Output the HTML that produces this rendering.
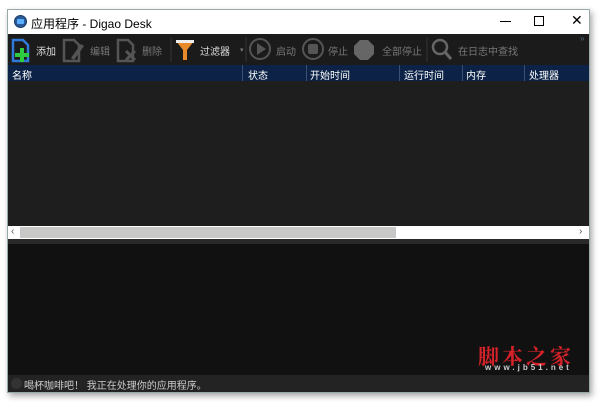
<!DOCTYPE html><html><head><meta charset="utf-8"><style>
*{margin:0;padding:0;box-sizing:border-box}
body{width:600px;height:402px;background:#fff;position:relative;overflow:hidden;font-family:"Liberation Sans","Noto Sans CJK SC",sans-serif;font-size:11px}
.win{position:absolute;left:7px;top:9px;width:583px;height:384px;border:1px solid #9aa;box-shadow:2px 3px 6px rgba(0,0,0,.35);background:#1e1e1e}
.title{position:absolute;left:0;top:0;width:581px;height:24px;background:#fff;color:#000;font-size:12px}
.tb{position:absolute;left:0;top:24px;width:581px;height:31px;background:#1b1b1b}
.hd{position:absolute;left:0;top:55px;width:581px;height:16px;background:#0c2347;color:#fff}
.hd span{position:absolute;top:2px;font-size:10px}
.hd i{position:absolute;top:0;width:1px;height:16px;background:#3b4f70}
.t{position:absolute;top:9px;font-size:10px;color:#777}
</style></head><body>
<div class="win">
<div class="title">
<div style="position:absolute;left:6px;top:5px;width:13px;height:13px;border-radius:50%;background:#2a5a96;border:1px solid #1a3a66"><div style="margin:3px 2px;width:7px;height:5px;background:#5ab0ff;border-radius:1px"></div></div>
<div style="position:absolute;left:23px;top:5px">应用程序 - Digao Desk</div>
<div style="position:absolute;left:492px;top:11px;width:11px;height:1px;background:#000"></div>
<div style="position:absolute;left:526px;top:6px;width:10px;height:10px;border:1px solid #000"></div>
<div style="position:absolute;left:563px;top:2px;font-size:14px">✕</div>
</div>
<div class="tb">
<svg width="581" height="31" style="position:absolute;left:0;top:0">
<path d="M5 6h10l5 5v16H5z" fill="none" stroke="#2f7ad8" stroke-width="2.5"/><path d="M14 14v14M7 21h14" stroke="#2ecc40" stroke-width="4"/>
<path d="M56 6h10l5 5v16H56z" fill="none" stroke="#555" stroke-width="2.5"/><path d="M63 24l10-14 3 2-10 14z" fill="#555"/>
<path d="M110 6h10l5 5v16h-15z" fill="none" stroke="#555" stroke-width="2.5"/><path d="M118 17l9 9M127 17l-9 9" stroke="#555" stroke-width="3"/>
<line x1="163" y1="3" x2="163" y2="28" stroke="#333"/>
<path d="M168 7h18l-7 9v10h-4V16z" fill="#e8892a"/><rect x="168" y="6" width="18" height="3" fill="#eee"/>
<text x="232" y="18" fill="#777" font-size="7">▾</text>
<line x1="238" y1="3" x2="238" y2="28" stroke="#333"/>
<circle cx="252" cy="15" r="10" fill="none" stroke="#555" stroke-width="2"/><path d="M249 9l9 6-9 6z" fill="#555"/>
<circle cx="305" cy="15" r="10" fill="none" stroke="#555" stroke-width="2"/><rect x="300" y="10" width="10" height="10" rx="2" fill="#555"/>
<path d="M352 6h8l6 6v8l-6 6h-8l-6-6v-8z" fill="#666"/>
<line x1="419" y1="3" x2="419" y2="28" stroke="#333"/>
<circle cx="432" cy="13" r="7" fill="none" stroke="#666" stroke-width="2.5"/><path d="M437 18l6 7" stroke="#666" stroke-width="3"/>
</svg>
<div class="t" style="left:28px;color:#ddd">添加</div>
<div class="t" style="left:82px">编辑</div>
<div class="t" style="left:134px">删除</div>
<div class="t" style="left:192px;color:#ddd">过滤器</div>
<div class="t" style="left:268px">启动</div>
<div class="t" style="left:320px">停止</div>
<div class="t" style="left:374px">全部停止</div>
<div class="t" style="left:450px">在日志中查找</div>
<div style="position:absolute;left:572px;top:0;font-size:8px;color:#567">»</div>
</div>
<div class="hd">
<span style="left:4px">名称</span><i style="left:234px"></i><span style="left:240px">状态</span><i style="left:298px"></i><span style="left:302px">开始时间</span><i style="left:391px"></i><span style="left:396px">运行时间</span><i style="left:454px"></i><span style="left:458px">内存</span><i style="left:516px"></i><span style="left:521px">处理器</span>
</div>
<div style="position:absolute;left:0;top:71px;width:581px;height:145px;background:#1e1e1e"></div>
<div style="position:absolute;left:0;top:216px;width:581px;height:13px;background:#fff">
<div style="position:absolute;left:12px;top:1px;width:376px;height:11px;background:#c8c8c6"></div>
<div style="position:absolute;left:3px;top:0;font-size:10px;color:#555">‹</div>
<div style="position:absolute;left:571px;top:0;font-size:10px;color:#555">›</div>
</div>
<div style="position:absolute;left:0;top:229px;width:581px;height:5px;background:#2a2a2a"></div>
<div style="position:absolute;left:0;top:234px;width:581px;height:131px;background:#111"></div>
<div style="position:absolute;left:470px;top:331px;color:#d8222a;font-size:21px;font-weight:bold;letter-spacing:3px;font-family:'Noto Serif CJK SC',serif">脚本之家</div>
<div style="position:absolute;left:477px;top:353px;color:#ccc;font-size:8px;letter-spacing:3px;font-weight:bold">www.jb51.net</div>
<div style="position:absolute;left:0;top:365px;width:581px;height:17px;background:#232323;color:#ccc;font-size:10px">
<div style="position:absolute;left:3px;top:3px;width:11px;height:11px;border-radius:50%;background:#333"></div>
<div style="position:absolute;left:16px;top:2px">喝杯咖啡吧！ 我正在处理你的应用程序。</div>
</div>
</div>
</body></html>
